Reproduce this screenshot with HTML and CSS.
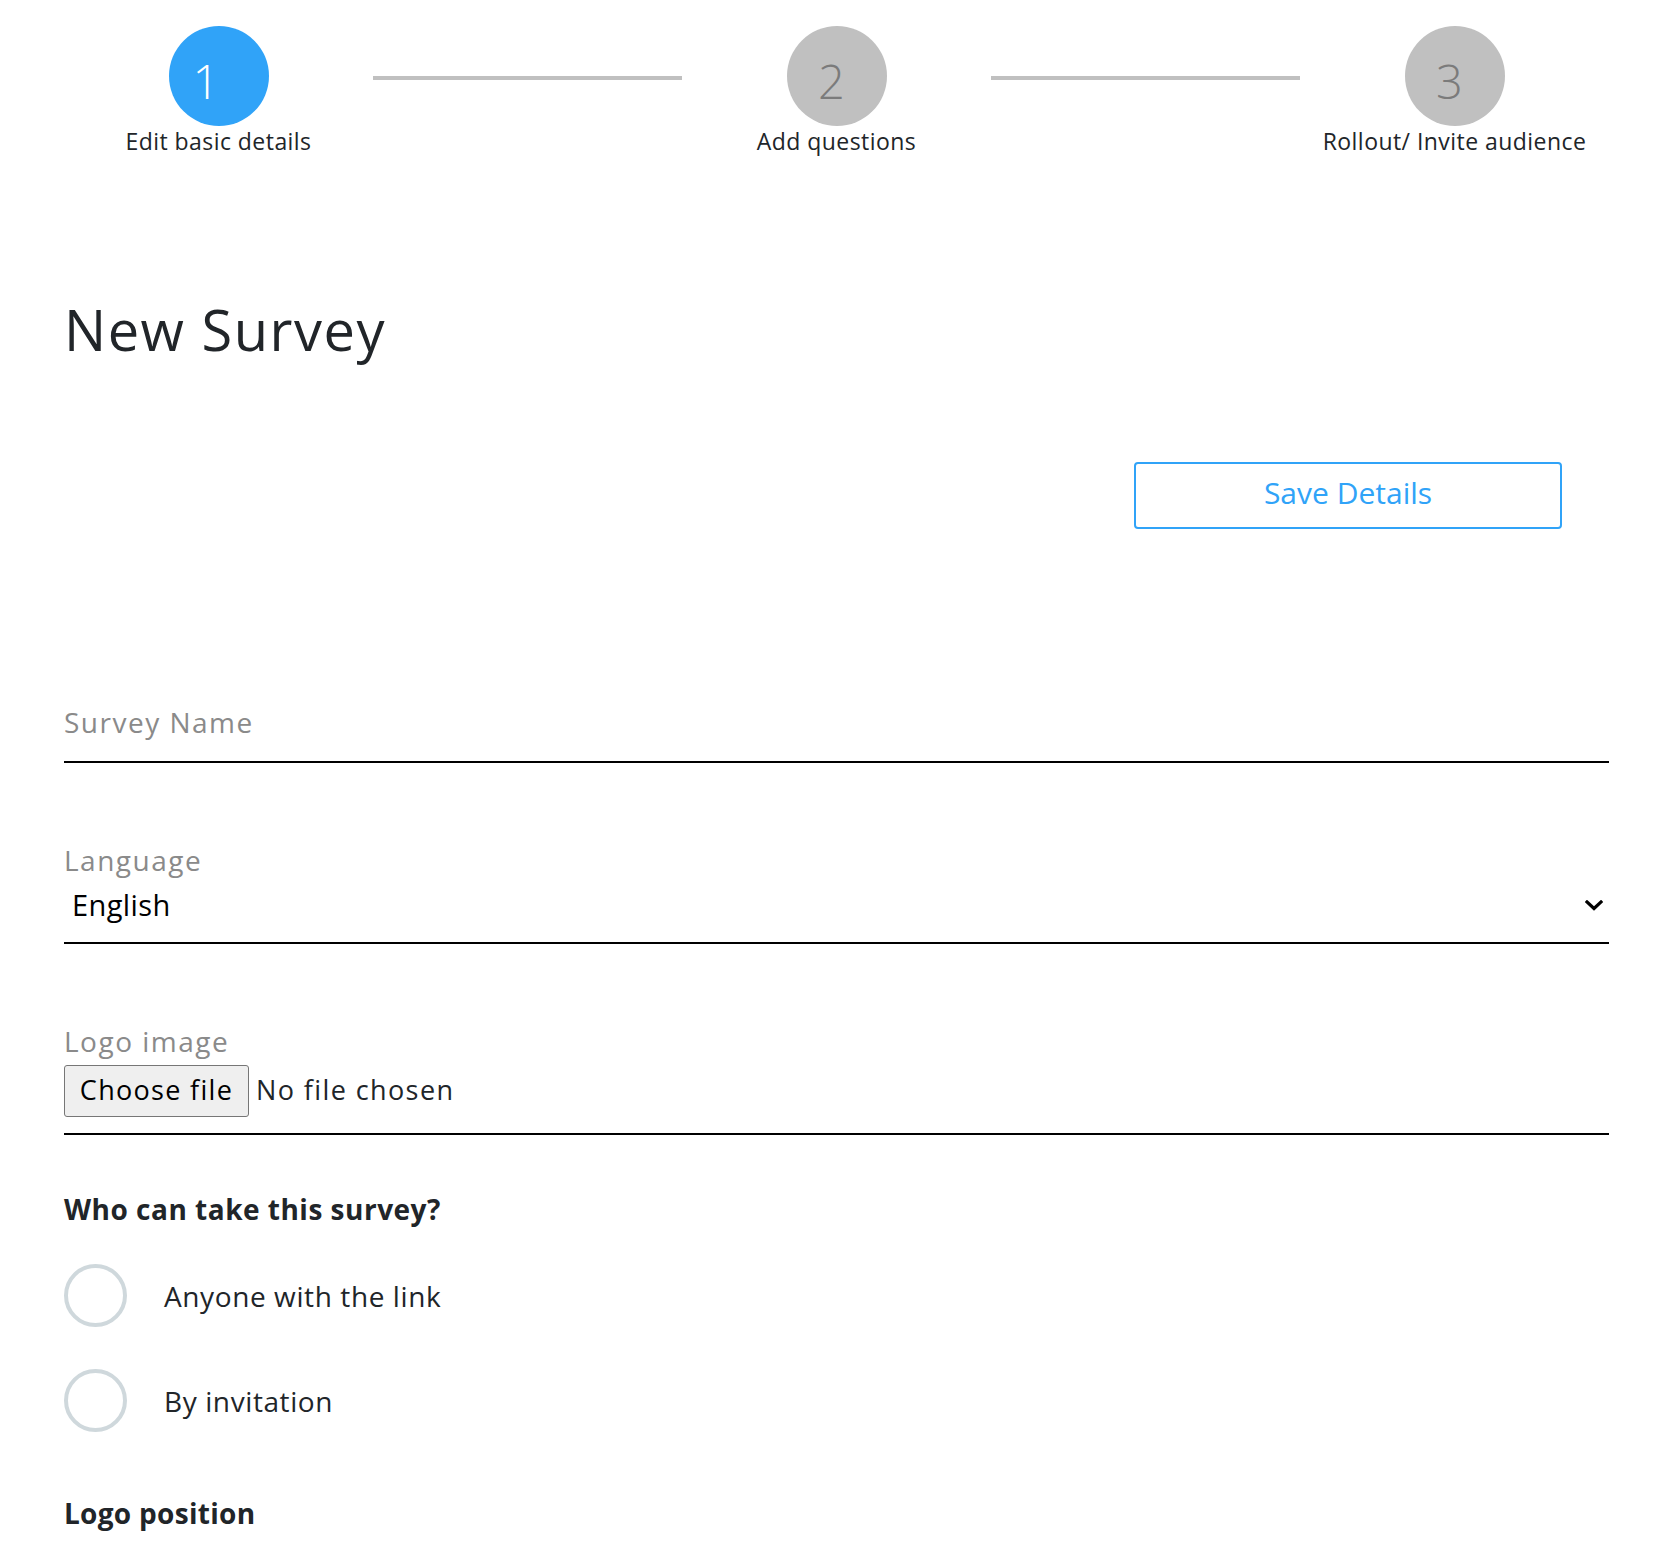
FILE: index.html
```html
<!DOCTYPE html>
<html lang="en">
<head>
<meta charset="utf-8">
<title>New Survey</title>
<link rel="stylesheet" href="styles.css">
</head>
<body>
<main class="page">
  <ol class="stepper">
    <li class="step step--active">
      <span class="step-num step-num--one">1</span>
      <span class="step-label">Edit basic details</span>
    </li>
    <li class="step-line" aria-hidden="true"></li>
    <li class="step">
      <span class="step-num">2</span>
      <span class="step-label">Add questions</span>
    </li>
    <li class="step-line" aria-hidden="true"></li>
    <li class="step">
      <span class="step-num">3</span>
      <span class="step-label">Rollout/ Invite audience</span>
    </li>
  </ol>

  <h1 class="title">New Survey</h1>

  <div class="actions">
    <button type="button" class="btn-outline">Save Details</button>
  </div>

  <form class="form">
    <div class="field field--text">
      <span class="field-label">Survey Name</span>
    </div>

    <div class="field field--select">
      <span class="field-label">Language</span>
      <div class="select-row">
        <span class="select-value">English</span>
        <svg class="chevron" viewBox="0 0 18 11" aria-hidden="true"><polyline points="2,2 9,8.5 16,2" fill="none" stroke="#000" stroke-width="3.2" stroke-linecap="square"/></svg>
      </div>
    </div>

    <div class="field field--file">
      <span class="field-label">Logo image</span>
      <div class="file-row">
        <span class="file-btn">Choose file</span>
        <span class="file-text">No file chosen</span>
      </div>
    </div>

    <h2 class="section-title">Who can take this survey?</h2>
    <div class="radio-list">
      <label class="radio"><input type="radio" name="audience" class="radio-input"><span class="radio-text">Anyone with the link</span></label>
      <label class="radio"><input type="radio" name="audience" class="radio-input"><span class="radio-text">By invitation</span></label>
    </div>

    <h2 class="section-title section-title--logo">Logo position</h2>
  </form>
</main>
</body>
</html>
```

FILE: styles.css
```css
* { box-sizing: border-box; }
html, body { margin: 0; background: #fff; }
body {
  font-family: "Open Sans", "Liberation Sans", sans-serif;
  color: #212529;
}

.page { padding: 26px 49px 40px 64px; }

/* Stepper */
.stepper {
  display: grid;
  grid-template-columns: repeat(5, 1fr);
  list-style: none;
  margin: 0;
  padding: 0;
}
.step {
  display: flex;
  flex-direction: column;
  align-items: center;
}
.step-num {
  display: block;
  width: 100px;
  height: 100px;
  padding-right: 10px;
  border-radius: 50%;
  background: #c0c0c0;
  color: #7b7b7b;
  font-size: 47px;
  font-weight: 300;
  line-height: 110px;
  text-align: center;
}
.step-num--one { padding-right: 25px; }
.step--active .step-num { background: #30a3f8; color: #fff; }
.step-label {
  font-size: 23px;
  line-height: 30px;
  letter-spacing: 0.45px;
  white-space: nowrap;
  color: #212529;
}
.step-line {
  height: 4px;
  margin-top: 50px;
  background: #c0c0c0;
}

/* Title + actions */
.title {
  margin: 140px 0 0;
  font-size: 56px;
  font-weight: 400;
  line-height: 67px;
  letter-spacing: 1.5px;
  color: #212529;
}
.actions {
  display: flex;
  justify-content: flex-end;
  margin-top: 99px;
  padding-right: 47px;
}
.btn-outline {
  width: 428px;
  height: 67px;
  padding: 0 0 6px;
  border: 2px solid #30a3f8;
  border-radius: 4px;
  background: #fff;
  color: #30a3f8;
  font-family: inherit;
  font-size: 30px;
  line-height: 57px;
}

/* Form */
.form { margin-top: 175px; }
.field { border-bottom: 2px solid #000; }
.field + .field { margin-top: 79px; }
.field--text { padding-bottom: 21px; }
.field--select { padding-bottom: 17px; }
.field--file { padding-bottom: 16px; }
.field-label {
  display: block;
  font-size: 28px;
  line-height: 36px;
  letter-spacing: 1.5px;
  color: #8a8a8a;
}
.select-row {
  display: flex;
  align-items: center;
  justify-content: space-between;
  margin-top: 7px;
  padding: 0 6px 0 8px;
}
.select-value {
  font-size: 29px;
  line-height: 40px;
  letter-spacing: 0.4px;
  color: #000;
}
.chevron { width: 18px; height: 11px; display: block; }

.file-row {
  display: flex;
  align-items: baseline;
  margin-top: 6px;
}
.file-btn {
  display: block;
  width: 185px;
  height: 52px;
  padding-bottom: 3px;
  border: 1px solid #767676;
  border-radius: 3px;
  background: #efefef;
  color: #000;
  font-size: 27px;
  line-height: 47px;
  letter-spacing: 1.3px;
  text-align: center;
}
.file-text {
  margin-left: 7px;
  font-size: 27px;
  line-height: 36px;
  letter-spacing: 1.4px;
  color: #212529;
}

.section-title {
  margin: 55px 0 0;
  font-size: 28px;
  font-weight: 700;
  line-height: 38px;
  letter-spacing: 0.5px;
  color: #212529;
}
.section-title--logo { margin-top: 62px; letter-spacing: 0.3px; }

.radio-list {
  display: flex;
  flex-direction: column;
  gap: 42px;
  margin-top: 36px;
}
.radio {
  display: flex;
  align-items: center;
  gap: 37px;
}
.radio-input {
  appearance: none;
  -webkit-appearance: none;
  flex: none;
  width: 63px;
  height: 63px;
  margin: 0;
  border: 4px solid #cfd8dc;
  border-radius: 50%;
  background: #fff;
}
.radio-text {
  font-size: 28px;
  line-height: 38px;
  letter-spacing: 0.6px;
  color: #212529;
}
```
